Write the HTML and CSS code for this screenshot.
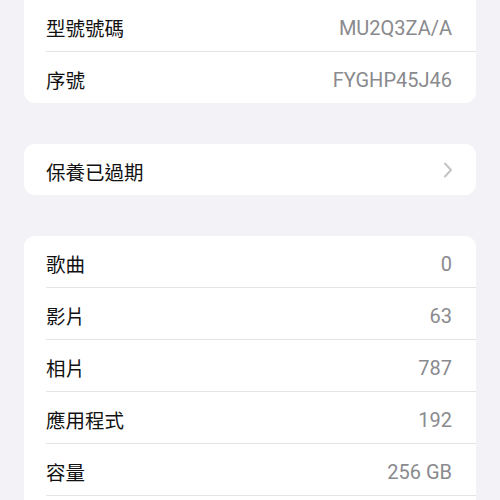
FILE: index.html
```html
<!DOCTYPE html>
<html lang="zh-Hant">
<head>
<meta charset="utf-8">
<link rel="stylesheet" href="styles.css">
</head>
<body>
<div class="page">
  <div class="card">
    <div class="row"><span class="label">型號號碼</span><span class="value">MU2Q3ZA/A</span></div>
    <div class="row"><span class="label">序號</span><span class="value">FYGHP45J46</span></div>
  </div>
  <div class="card">
    <div class="row"><span class="label">保養已過期</span>
      <svg class="chev" width="10" height="16" viewBox="0 0 10 16"><path d="M2 1.5 L8 8 L2 14.5" fill="none" stroke="#c4c4c8" stroke-width="2" stroke-linecap="round" stroke-linejoin="round"/></svg>
    </div>
  </div>
  <div class="card more">
    <div class="row"><span class="label">歌曲</span><span class="value">0</span></div>
    <div class="row"><span class="label">影片</span><span class="value">63</span></div>
    <div class="row"><span class="label">相片</span><span class="value">787</span></div>
    <div class="row"><span class="label">應用程式</span><span class="value">192</span></div>
    <div class="row"><span class="label">容量</span><span class="value">256 GB</span></div>
  </div>
</div>
</body>
</html>
```
FILE: styles.css
```css
html, body {
  margin: 0;
  padding: 0;
  background: #f2f2f7;
}
body {
  font-family: Inter, "Noto Sans CJK TC", sans-serif;
  font-size: 19.5px;
  overflow: hidden;
}
.page {
  display: flex;
  flex-direction: column;
  gap: 41px;
  padding: 0 24px;
}
.card {
  background: #fff;
  border-radius: 11px;
  padding-left: 22px;
}
.card:first-child {
  border-top-left-radius: 0;
  border-top-right-radius: 0;
}
.card.more {
  padding-bottom: 40px;
}
.row {
  box-sizing: border-box;
  height: 52px;
  display: flex;
  align-items: center;
  justify-content: space-between;
  padding: 4px 24px 0 0;
  border-bottom: 1px solid #e3e3e8;
}
.row:last-child {
  border-bottom: none;
  height: 51px;
}
.card.more .row:last-child {
  border-bottom: 1px solid #e3e3e8;
  height: 52px;
}
.label {
  color: #111;
}
.value {
  color: #8a8a8e;
  font-family: Roboto, sans-serif;
  font-size: 20px;
}
.chev {
  margin-top: -4px;
  margin-right: -1px;
}
```
